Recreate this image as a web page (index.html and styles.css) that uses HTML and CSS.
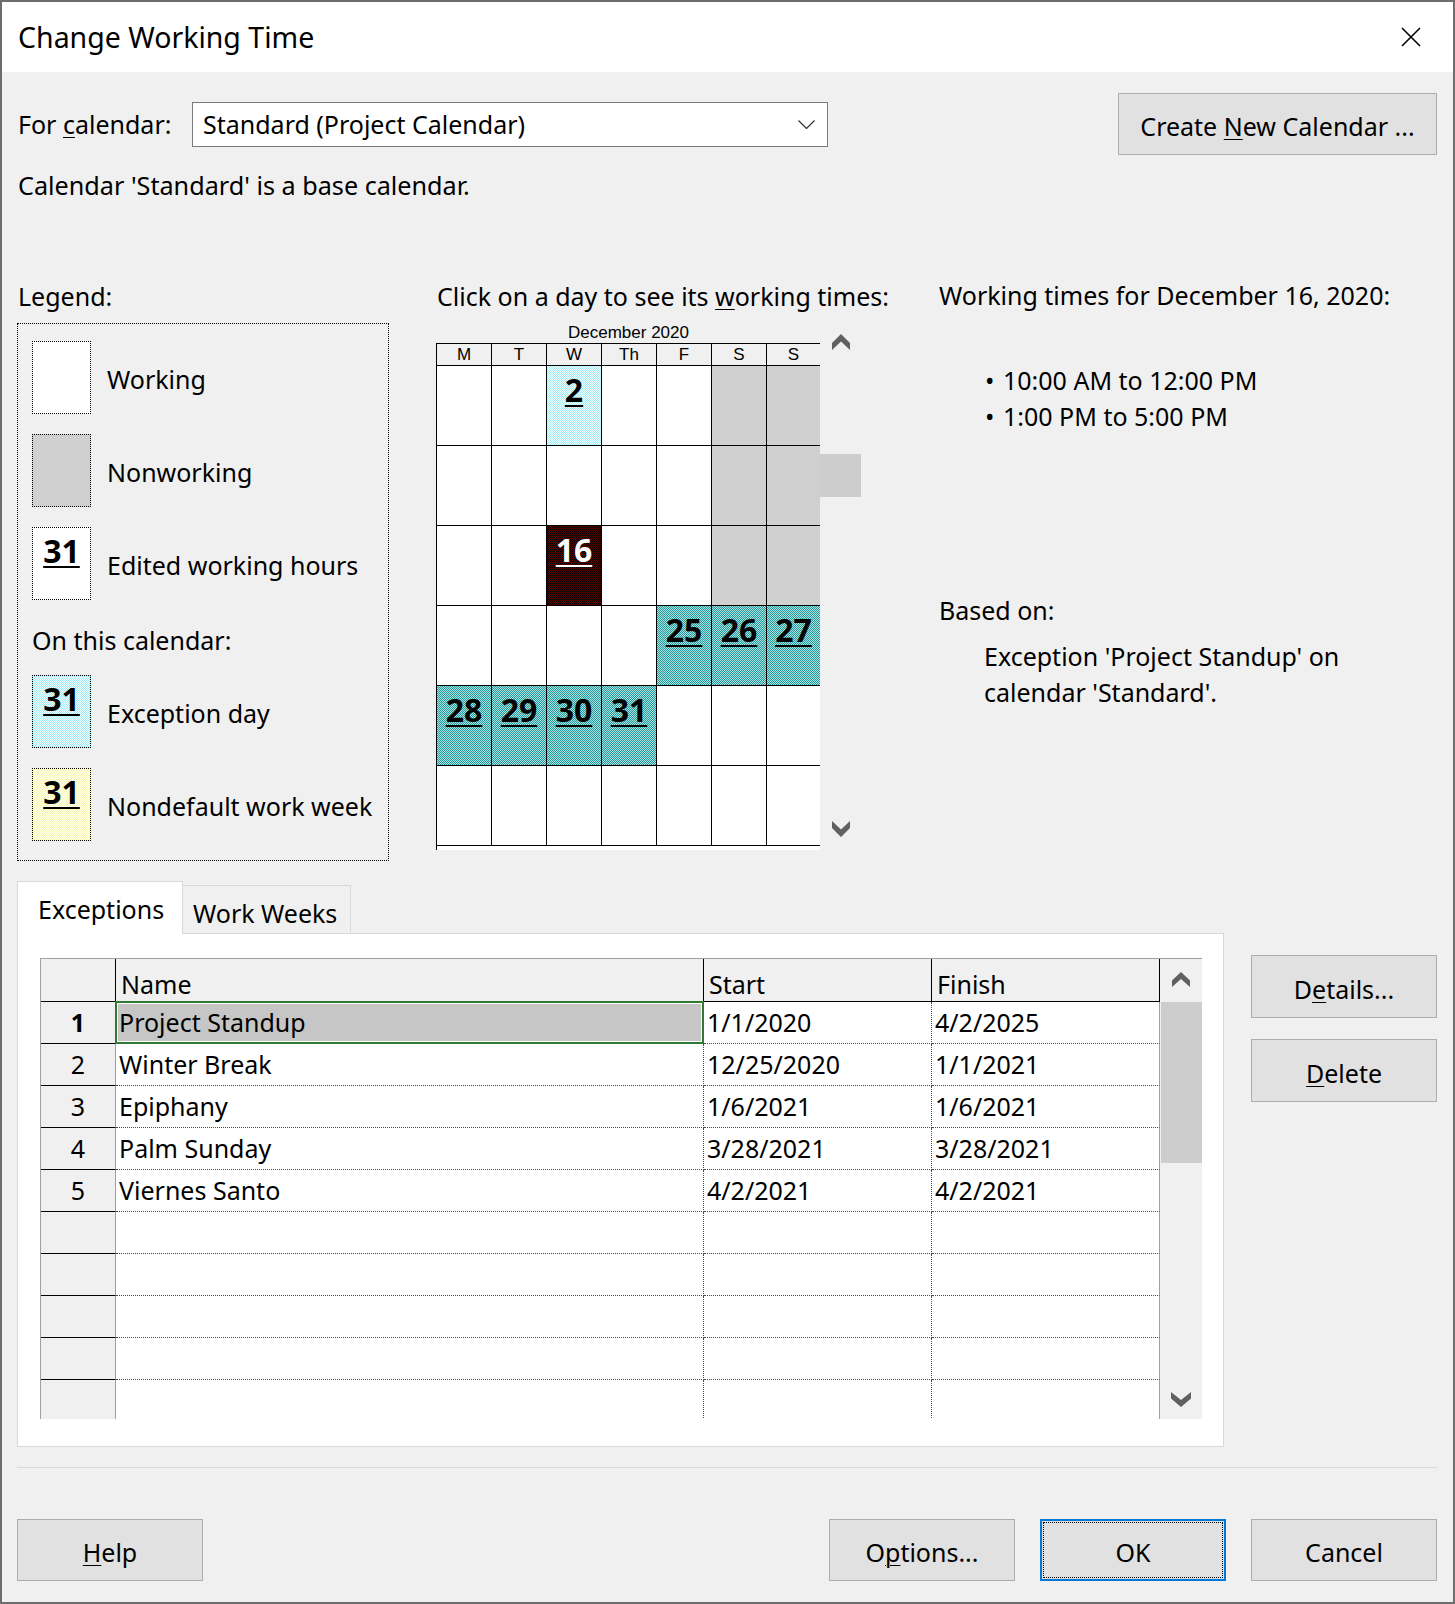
FILE: index.html
```html
<!DOCTYPE html>
<html lang="en">
<head>
<meta charset="utf-8">
<title>Change Working Time</title>
<link rel="stylesheet" href="styles.css">
</head>
<body>
<div class="dialog">
  <header class="titlebar">
    <span class="title">Change Working Time</span>
    <svg class="close" width="20" height="20" viewBox="0 0 20 20"><path d="M1 1L19 19M19 1L1 19" stroke="#000" stroke-width="1.6" fill="none"/></svg>
  </header>

  <main class="body">
    <div class="row-cal">
      <span class="lbl-for">For <u>c</u>alendar:</span>
      <div class="combo">
        <span>Standard (Project Calendar)</span>
        <svg width="17" height="9" viewBox="0 0 17 9"><path d="M0.5 0.5L8.5 8.5L16.5 0.5" fill="none" stroke="#333" stroke-width="1.2"/></svg>
      </div>
      <button class="btn btn-create"><span>Create <u>N</u>ew Calendar ...</span></button>
    </div>

    <p class="base-note">Calendar 'Standard' is a base calendar.</p>

    <div class="row-main">
      <section class="legend-col">
        <div class="lbl legend-lbl">Legend:</div>
        <div class="legend-box">
          <div class="leg-item"><span class="sw sw-work"></span><span class="leg-lbl">Working</span></div>
          <div class="leg-item gap"><span class="sw sw-non"></span><span class="leg-lbl">Nonworking</span></div>
          <div class="leg-item gap"><span class="sw sw-work"><span class="num">31</span></span><span class="leg-lbl">Edited working hours</span></div>
          <div class="leg-sub">On this calendar:</div>
          <div class="leg-item after-sub"><span class="sw sw-exc"><span class="num">31</span></span><span class="leg-lbl">Exception day</span></div>
          <div class="leg-item gap"><span class="sw sw-nd"><span class="num">31</span></span><span class="leg-lbl">Nondefault work week</span></div>
        </div>
      </section>

      <section class="cal-col">
        <div class="lbl cal-lbl">Click on a day to see its <u>w</u>orking times:</div>
        <div class="cal">
          <div class="cal-main">
            <div class="cal-month">December 2020</div>
            <div class="cal-grid">
              <div class="dow">M</div><div class="dow">T</div><div class="dow">W</div><div class="dow">Th</div><div class="dow">F</div><div class="dow">S</div><div class="dow">S</div>

              <div class="day"></div><div class="day"></div><div class="day exc">2</div><div class="day"></div><div class="day"></div><div class="day non"></div><div class="day non"></div>

              <div class="day"></div><div class="day"></div><div class="day"></div><div class="day"></div><div class="day"></div><div class="day non"></div><div class="day non"></div>

              <div class="day"></div><div class="day"></div><div class="day sel">16</div><div class="day"></div><div class="day"></div><div class="day non"></div><div class="day non"></div>

              <div class="day"></div><div class="day"></div><div class="day"></div><div class="day"></div><div class="day teal">25</div><div class="day teal">26</div><div class="day teal">27</div>

              <div class="day teal">28</div><div class="day teal">29</div><div class="day teal">30</div><div class="day teal">31</div><div class="day"></div><div class="day"></div><div class="day"></div>

              <div class="day"></div><div class="day"></div><div class="day"></div><div class="day"></div><div class="day"></div><div class="day"></div><div class="day"></div>
            </div>
          </div>
          <div class="cal-scroll">
            <svg class="chev-up" width="18" height="16" viewBox="0 0 18 16"><path d="M9 0L18 9V16L9 7.5L0 16V9Z" fill="#606060"/></svg>
            <div class="cal-thumb"></div>
            <div class="grow"></div>
            <svg class="chev-down" width="18" height="16" viewBox="0 0 18 16"><path d="M0 0L9 8.5L18 0V7L9 16L0 7Z" fill="#606060"/></svg>
          </div>
        </div>
      </section>

      <section class="times-col">
        <div class="times-head">Working times for December 16, 2020:</div>
        <ul class="times-list">
          <li><span class="bullet">•</span>10:00 AM to 12:00 PM</li>
          <li><span class="bullet">•</span>1:00 PM to 5:00 PM</li>
        </ul>
        <div class="based">Based on:</div>
        <div class="based-text">Exception 'Project Standup' on<br>calendar 'Standard'.</div>
      </section>
    </div>

    <div class="row-tabs">
      <div class="tabwrap">
        <div class="tabs">
          <div class="tab active">Exceptions</div>
          <div class="tab inactive">Work Weeks</div>
        </div>
        <div class="panel">
          <div class="table">
            <div class="tgrid">
              <div class="th"></div><div class="th">Name</div><div class="th">Start</div><div class="th">Finish</div>

              <div class="rn bold">1</div><div class="td sel">Project Standup</div><div class="td">1/1/2020</div><div class="td fin">4/2/2025</div>
              <div class="rn">2</div><div class="td">Winter Break</div><div class="td">12/25/2020</div><div class="td fin">1/1/2021</div>
              <div class="rn">3</div><div class="td">Epiphany</div><div class="td">1/6/2021</div><div class="td fin">1/6/2021</div>
              <div class="rn">4</div><div class="td">Palm Sunday</div><div class="td">3/28/2021</div><div class="td fin">3/28/2021</div>
              <div class="rn">5</div><div class="td">Viernes Santo</div><div class="td">4/2/2021</div><div class="td fin">4/2/2021</div>
              <div class="rn"></div><div class="td"></div><div class="td"></div><div class="td fin"></div>
              <div class="rn"></div><div class="td"></div><div class="td"></div><div class="td fin"></div>
              <div class="rn"></div><div class="td"></div><div class="td"></div><div class="td fin"></div>
              <div class="rn"></div><div class="td"></div><div class="td"></div><div class="td fin"></div>
              <div class="rn"></div><div class="td"></div><div class="td"></div><div class="td fin"></div>
            </div>
            <div class="tscroll">
              <svg class="tchev-up" width="18" height="15" viewBox="0 0 18 15"><path d="M9 0L18 8.5V15L9 7L0 15V8.5Z" fill="#606060"/></svg>
              <div class="t-thumb"></div>
              <div class="grow"></div>
              <svg class="tchev-down" width="20" height="15" viewBox="0 0 20 15"><path d="M0 0L10 8L20 0V6.5L10 15L0 6.5Z" fill="#606060"/></svg>
            </div>
          </div>
        </div>
      </div>
      <div class="side-btns">
        <button class="btn btn-side"><span>D<u>e</u>tails...</span></button>
        <button class="btn btn-side"><span><u>D</u>elete</span></button>
      </div>
    </div>

    <hr class="sep">

    <div class="row-bottom">
      <button class="btn"><span><u>H</u>elp</span></button>
      <span class="grow"></span>
      <button class="btn"><span>O<u>p</u>tions...</span></button>
      <button class="btn btn-ok"><span class="focus">OK</span></button>
      <button class="btn"><span>Cancel</span></button>
    </div>
  </main>
</div>
</body>
</html>
```

FILE: styles.css
```css
* { box-sizing: border-box; }

html, body {
  margin: 0;
  padding: 0;
}

body {
  width: 1455px;
  height: 1604px;
  overflow: hidden;
  background: #f0f0f0;
  font-family: "Noto Sans", "Open Sans", sans-serif;
  font-size: 25px;
  line-height: 34px;
  color: #000;
}

u { text-decoration-thickness: 1px; text-underline-offset: 3px; }

.dialog {
  width: 1455px;
  height: 1604px;
  border: 2px solid #6d6d6d;
  background: #f0f0f0;
  display: flex;
  flex-direction: column;
}

/* title bar */
.titlebar {
  flex: none;
  height: 70px;
  background: #fff;
  display: flex;
  align-items: center;
  padding: 0 32px 0 16px;
}
.title { flex: 1; font-size: 28.5px; }
.close { display: block; }

.body { padding: 0 16px 0 15px; }

/* buttons */
.btn {
  font: inherit;
  color: #000;
  background: #e1e1e1;
  border: 1px solid #adadad;
  border-radius: 0;
  width: 186px;
  height: 62px;
  padding: 4px 0 0;
  margin: 0;
  display: flex;
  align-items: center;
  justify-content: center;
  flex: none;
  white-space: nowrap;
}

/* for calendar row */
.row-cal {
  display: flex;
  align-items: center;
  height: 62px;
  margin-top: 21px;
}
.lbl-for { width: 175px; padding-left: 1px; flex: none; }
.combo {
  width: 636px;
  height: 45px;
  border: 1px solid #7a7a7a;
  background: #fff;
  display: flex;
  align-items: center;
  justify-content: space-between;
  padding: 0 12px 0 10px;
  flex: none;
}
.combo svg { display: block; }
.btn-create { width: 319px; margin-left: auto; }

.base-note { margin: 13px 0 0; padding-left: 1px; font-size: 25.2px; }

/* main three columns */
.row-main {
  display: flex;
  align-items: flex-start;
  margin-top: 75px;
}
.lbl { padding-left: 1px; white-space: nowrap; }

/* legend */
.legend-col { width: 372px; flex: none; }
.legend-lbl { margin-top: 2px; }
.legend-box {
  margin-top: 10px;
  height: 538px;
  border: 1px dotted #000;
  padding: 17px 0 0 14px;
}
.leg-item { display: flex; align-items: center; height: 73px; }
.leg-item.gap { margin-top: 20px; }
.leg-item.after-sub { margin-top: 18px; }
.leg-sub { margin-top: 23px; }
.leg-lbl { margin-left: 16px; padding-top: 3px; white-space: nowrap; }
.sw {
  width: 59px;
  height: 73px;
  flex: none;
  border: 1px dotted #000;
  text-align: center;
  padding-top: 3px;
}
.sw-work { background: #fff; }
.sw-non { background: #d0d0d0; }
.sw-exc { background: repeating-conic-gradient(#a6eef5 0 25%, #f4feff 0 50%) 0 0 / 2px 2px; }
.sw-nd { background: repeating-conic-gradient(#f8f8b4 0 25%, #ffffee 0 50%) 0 0 / 2px 2px; }

.num, .day {
  font-weight: 700;
  font-size: 32px;
  line-height: 40px;
  text-decoration: underline;
  text-decoration-thickness: 2px;
  text-underline-offset: 3px;
}
.num { display: block; }

/* calendar */
.cal-col { width: 425px; margin-left: 47px; flex: none; }
.cal-lbl { margin-top: 2px; }
.cal { display: flex; margin-top: 9px; }
.cal-main { width: 384px; }
.cal-month {
  height: 21px;
  font: 17px/21px "Liberation Sans", Arial, sans-serif;
  text-align: center;
  padding-left: 1px;
}
.cal-grid {
  display: grid;
  grid-template-columns: repeat(6, 55px) 53px;
  grid-template-rows: 22px repeat(6, 80px);
  border-left: 1px solid #000;
  border-top: 1px solid #000;
  background: #fff;
  padding-bottom: 4px;
}
.cal-grid > div {
  border-right: 1px solid #000;
  border-bottom: 1px solid #000;
}
.cal-grid > div:nth-child(7n) { border-right: none; }
.dow {
  background: #f0f0f0;
  font: 17px/21px "Liberation Sans", Arial, sans-serif;
  text-align: center;
}
.day { padding-top: 4px; text-align: center; background: #fff; }
.day.non { background: #d0d0d0; }
.day.exc { background: repeating-conic-gradient(#a6eef5 0 25%, #f4feff 0 50%) 0 0 / 2px 2px; }
.day.sel { background: repeating-conic-gradient(#5c0000 0 25%, #000 0 50%) 0 0 / 2px 2px; color: #fff; }
.day.teal { background: repeating-conic-gradient(#239a9a 0 25%, #ade0e0 0 50%) 0 0 / 2px 2px; }

.cal-scroll {
  width: 41px;
  height: 527px;
  display: flex;
  flex-direction: column;
  align-items: center;
  flex: none;
}
.cal-scroll svg { display: block; flex: none; }
.chev-up { margin-top: 12px; }
.cal-thumb { width: 41px; height: 43px; margin-top: 104px; background: #cdcdcd; flex: none; }
.chev-down { margin-bottom: 12px; }
.grow { flex: 1; }

/* working times */
.times-col { margin-left: 78px; flex: none; }
.times-head { margin-top: 1px; white-space: nowrap; }
.times-list {
  list-style: none;
  margin: 50px 0 0;
  padding: 0 0 0 46px;
  line-height: 36px;
}
.times-list li { display: flex; }
.bullet { width: 18px; flex: none; }
.based { margin-top: 159px; }
.based-text { margin-top: 11px; padding-left: 45px; line-height: 36px; white-space: nowrap; }

/* tabs */
.row-tabs {
  display: flex;
  align-items: flex-start;
  margin-top: 20px;
}
.tabwrap { width: 1207px; flex: none; }
.tabs { display: flex; align-items: flex-end; height: 52px; }
.tab { white-space: nowrap; }
.tab.active {
  width: 166px;
  height: 53px;
  margin-bottom: -1px;
  background: #fff;
  border: 1px solid #d9d9d9;
  border-bottom: none;
  padding: 10px 0 0 20px;
  position: relative;
  z-index: 1;
}
.tab.inactive {
  width: 168px;
  height: 48px;
  background: #f0f0f0;
  border: 1px solid #d9d9d9;
  border-left: none;
  border-bottom: none;
  padding: 10px 0 0 10px;
}
.panel {
  height: 514px;
  background: #fff;
  border: 1px solid #d9d9d9;
  padding: 24px 21px 27px 22px;
}

/* exceptions table */
.table {
  display: flex;
  width: 1162px;
  height: 461px;
  border-top: 1px solid #a0a0a0;
  border-left: 1px solid #a0a0a0;
  overflow: hidden;
}
.tgrid {
  display: grid;
  grid-template-columns: 75px 588px 228px 228px;
  grid-template-rows: 43px;
  grid-auto-rows: 42px;
  align-content: start;
  width: 1119px;
  height: 460px;
  overflow: hidden;
  flex: none;
}
.th {
  background: #f0f0f0;
  border-right: 1px solid #000;
  border-bottom: 1px solid #000;
  padding: 8px 0 0 5px;
}
.rn {
  background: #f0f0f0;
  border-right: 1px solid #a0a0a0;
  border-bottom: 1px solid #000;
  text-align: center;
  padding-top: 3px;
}
.rn.bold { font-weight: 700; }
.td {
  background: #fff;
  border-right: 1px dotted #4a4a4a;
  border-bottom: 1px dotted #4a4a4a;
  padding: 3px 0 0 3px;
  white-space: nowrap;
}
.td.fin { border-right: 1px solid #a0a0a0; }
.td.sel { background: #c6c6c6; position: relative; }
.td.sel::after {
  content: "";
  position: absolute;
  top: -1px;
  left: -1px;
  right: -1px;
  bottom: -1px;
  border: 2px solid #2f7a33;
  box-shadow: inset 0 0 0 1px #fff;
}

.tscroll {
  width: 42px;
  height: 460px;
  background: #f0f0f0;
  display: flex;
  flex-direction: column;
  align-items: center;
  flex: none;
}
.tscroll svg { display: block; flex: none; }
.tchev-up { margin-top: 13px; }
.t-thumb { width: 41px; height: 161px; margin-top: 15px; align-self: flex-end; background: #cdcdcd; flex: none; }
.tchev-down { margin-bottom: 12px; }

.side-btns {
  margin-left: 27px;
  padding-top: 74px;
  display: flex;
  flex-direction: column;
  gap: 21px;
}
.btn-side { height: 63px; }

/* footer */
.sep {
  margin: 20px 0 0;
  height: 0;
  border: none;
  border-top: 1px solid #dadada;
}
.row-bottom {
  display: flex;
  gap: 25px;
  margin-top: 51px;
}
.btn-ok {
  border: 2px solid #0078d7;
  padding: 1px;
}
.btn-ok .focus {
  flex: 1;
  align-self: stretch;
  border: 1px dotted #000;
  display: flex;
  align-items: center;
  justify-content: center;
  padding-top: 3px;
}
```
